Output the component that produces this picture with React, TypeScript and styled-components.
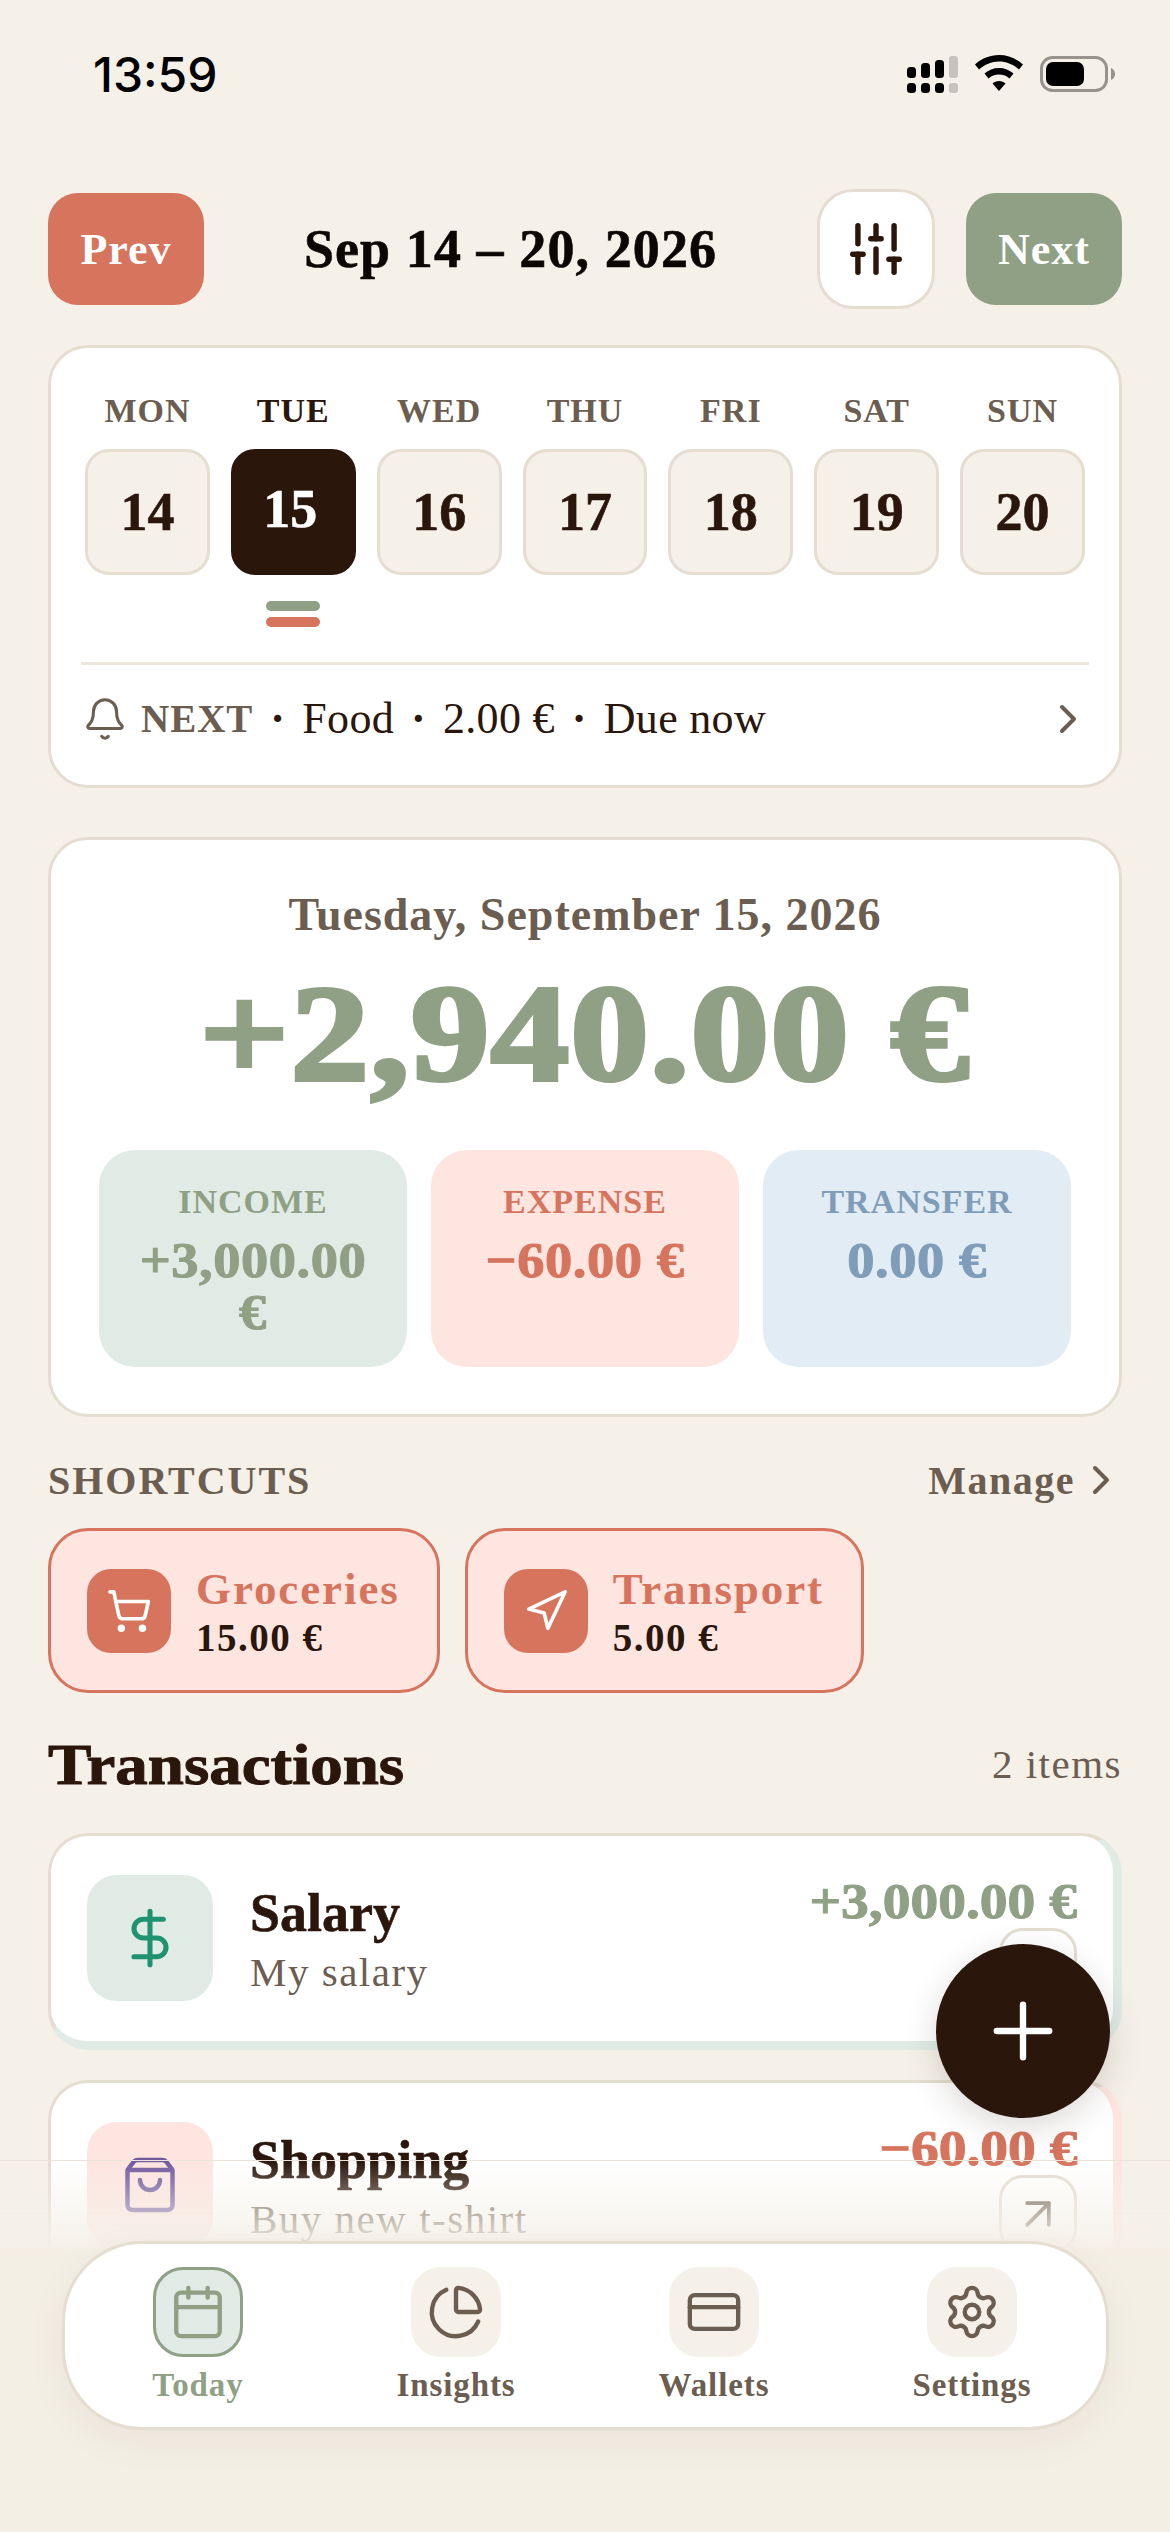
import React from "react";
import styled, { createGlobalStyle } from "styled-components";
import {
  ArrowUpRight,
  Bell,
  Calendar,
  ChartPie,
  ChevronRight,
  CreditCard,
  DollarSign,
  Navigation,
  Plus,
  Settings,
  ShoppingBag,
  ShoppingCart,
  SlidersVertical,
} from "lucide-react";

const SERIF = `"Liberation Serif", "Times New Roman", serif`;

const colors = {
  bg: "#f5f1e9",
  line: "#e5ddd0",
  ink: "#2b160c",
  muted: "#6b5d50",
  sage: "#8fa085",
  coral: "#d6745e",
  sky: "#7f9db8",
  sageSoft: "#e0ebe6",
  coralSoft: "#fee5e0",
  skySoft: "#e2ecf4",
};

const GlobalStyle = createGlobalStyle`
  html, body {
    margin: 0;
    padding: 0;
    background: ${colors.bg};
  }
  * {
    box-sizing: border-box;
  }
`;

const Page = styled.div`
  position: relative;
  width: 1170px;
  height: 2532px;
  overflow: hidden;
  background: ${colors.bg};
  font-family: ${SERIF};
  color: ${colors.ink};
`;

const StatusBar = styled.div`
  display: flex;
  align-items: center;
  justify-content: space-between;
  height: 52px;
  margin-top: 48px;
  padding: 0 55px 0 93px;
`;

const Clock = styled.div`
  font-family: Inter, sans-serif;
  font-size: 48px;
  font-weight: 500;
  color: #000;
`;

const StatusIcons = styled.svg`
  display: block;
`;

const Content = styled.main`
  display: flex;
  flex-direction: column;
  padding: 89px 48px 0;
`;

const TopBar = styled.div`
  display: flex;
  align-items: center;
  height: 120px;
`;

const NavButton = styled.button<{ $bg: string }>`
  width: 156px;
  height: 112px;
  border: 0;
  border-radius: 30px;
  background: ${(p) => p.$bg};
  color: #fff;
  font-family: ${SERIF};
  font-size: 44px;
  font-weight: 700;
  letter-spacing: 1px;
`;

const RangeTitle = styled.h1`
  flex: 1;
  margin: 0;
  text-align: center;
  color: #0c0704;
  font-size: 54px;
  font-weight: 700;
  letter-spacing: 1.1px;
  -webkit-text-stroke: 0.6px #0c0704;
`;

const FilterButton = styled.button`
  display: flex;
  align-items: center;
  justify-content: center;
  width: 118px;
  height: 120px;
  margin-right: 31px;
  border: 3px solid ${colors.line};
  border-radius: 36px;
  background: #fff;
  color: ${colors.ink};
  padding: 0;
`;

const Card = styled.section`
  background: #fff;
  border: 3px solid ${colors.line};
  border-radius: 40px;
`;

const WeekCard = styled(Card)`
  margin-top: 36px;
  height: 443px;
  padding: 43px 30px 0;
`;

const WeekGrid = styled.div`
  display: grid;
  grid-template-columns: repeat(7, 1fr);
  column-gap: 21px;
  padding: 0 4px;
`;

const DayColumn = styled.div`
  display: flex;
  flex-direction: column;
  align-items: center;
`;

const DayName = styled.div<{ $active?: boolean }>`
  height: 40px;
  line-height: 40px;
  font-size: 34px;
  font-weight: 700;
  letter-spacing: 1px;
  color: ${(p) => (p.$active ? colors.ink : colors.muted)};
`;

const DayCell = styled.div<{ $active?: boolean }>`
  display: flex;
  align-items: center;
  justify-content: center;
  width: 100%;
  height: 126px;
  margin-top: 18px;
  padding: ${(p) => (p.$active ? "0 6px 6px 0" : "0")};
  border-radius: 24px;
  border: 3px solid ${(p) => (p.$active ? colors.ink : colors.line)};
  background: ${(p) => (p.$active ? colors.ink : colors.bg)};
  color: ${(p) => (p.$active ? "#fff" : colors.ink)};
  font-size: 54px;
  font-weight: 700;
  -webkit-text-stroke: 0.6px currentColor;
`;

const MarkerStack = styled.div`
  display: flex;
  flex-direction: column;
  gap: 6px;
  height: 87px;
  padding-top: 26px;
`;

const Marker = styled.span<{ $color: string }>`
  display: block;
  width: 54px;
  height: 10px;
  border-radius: 5px;
  background: ${(p) => p.$color};
`;

const NextRow = styled.div`
  display: flex;
  align-items: center;
  height: 110px;
  border-top: 3px solid #ece6db;
  font-size: 44px;
  letter-spacing: 0.3px;
  color: ${colors.ink};
`;

const NextBell = styled(Bell)`
  margin-left: 1px;
`;

const NextLabel = styled.span`
  margin-left: 13px;
  font-size: 39px;
  font-weight: 700;
  letter-spacing: 1px;
  color: ${colors.muted};
`;

const Dot = styled.span`
  margin: 0 17px;
  font-weight: 700;
`;

const RowEnd = styled.span`
  display: flex;
  margin-left: auto;
  margin-right: -3px;
`;

const BalanceCard = styled(Card)`
  margin-top: 49px;
  height: 580px;
  padding: 47px 48px 0;
  text-align: center;
`;

const BalanceDate = styled.div`
  height: 56px;
  line-height: 56px;
  font-size: 46px;
  font-weight: 700;
  letter-spacing: 1px;
  color: ${colors.muted};
`;

const BalanceAmount = styled.div`
  height: 190px;
  line-height: 182px;
  font-size: 138px;
  font-weight: 700;
  letter-spacing: 1px;
  color: ${colors.sage};
  -webkit-text-stroke: 4px ${colors.sage};
  white-space: nowrap;
  transform: scaleX(1.14);
`;

const SummaryGrid = styled.div`
  display: grid;
  grid-template-columns: repeat(3, 1fr);
  gap: 24px;
  margin-top: 17px;
`;

const SummaryTile = styled.div<{ $bg: string; $fg: string }>`
  height: 217px;
  padding: 30px 35px 0;
  border-radius: 36px;
  background: ${(p) => p.$bg};
  color: ${(p) => p.$fg};
`;

const SummaryLabel = styled.div`
  height: 44px;
  line-height: 44px;
  font-size: 34px;
  font-weight: 700;
  letter-spacing: 1px;
`;

const SummaryValue = styled.div`
  margin-top: 10px;
  line-height: 52px;
  font-size: 50px;
  font-weight: 700;
  letter-spacing: 0.5px;
  -webkit-text-stroke: 1px currentColor;
  transform: scaleX(1.09);
`;

const SectionHeader = styled.div<{ $top: number; $height: number }>`
  display: flex;
  align-items: center;
  justify-content: space-between;
  height: ${(p) => p.$height}px;
  margin-top: ${(p) => p.$top}px;
`;

const Eyebrow = styled.h2`
  margin: 0;
  font-size: 40px;
  font-weight: 700;
  letter-spacing: 2px;
  color: ${colors.muted};
`;

const ManageLink = styled.span`
  display: flex;
  align-items: center;
  gap: 2px;
  margin-right: -3px;
  font-size: 40px;
  font-weight: 700;
  letter-spacing: 1.5px;
  color: ${colors.muted};
`;

const ShortcutRow = styled.div`
  display: flex;
  gap: 25px;
  margin-top: 23px;
`;

const Shortcut = styled.div`
  display: flex;
  align-items: center;
  gap: 25px;
  height: 165px;
  padding: 0 37px 0 36px;
  border: 3px solid ${colors.coral};
  border-radius: 40px;
  background: ${colors.coralSoft};
`;

const ShortcutIcon = styled.div`
  display: flex;
  align-items: center;
  justify-content: center;
  width: 84px;
  height: 84px;
  border-radius: 24px;
  background: ${colors.coral};
  color: #fff;
`;

const ShortcutText = styled.div`
  display: flex;
  flex-direction: column;
`;

const ShortcutName = styled.div`
  line-height: 54px;
  font-size: 45px;
  font-weight: 700;
  letter-spacing: 1.9px;
  color: ${colors.coral};
`;

const ShortcutValue = styled.div`
  line-height: 44px;
  font-size: 39px;
  font-weight: 700;
  letter-spacing: 1.5px;
  color: ${colors.ink};
`;

const ListTitle = styled.h2`
  margin: 0;
  font-size: 58px;
  font-weight: 700;
  -webkit-text-stroke: 1px ${colors.ink};
  transform: scaleX(1.12);
  transform-origin: left center;
`;

const ItemCount = styled.span`
  font-size: 41px;
  letter-spacing: 1.5px;
  color: ${colors.muted};
`;

const TxList = styled.div`
  display: flex;
  flex-direction: column;
  gap: 30px;
  margin-top: 34px;
`;

const TxCard = styled(Card)<{ $tint: string }>`
  display: flex;
  align-items: flex-start;
  gap: 37px;
  height: 217px;
  padding: 39px 36px 0 36px;
  border-right: 9px solid ${(p) => p.$tint};
  border-bottom: 9px solid ${(p) => p.$tint};
`;

const TxIcon = styled.div<{ $bg: string; $fg: string }>`
  display: flex;
  flex: none;
  align-items: center;
  justify-content: center;
  width: 126px;
  height: 126px;
  border-radius: 30px;
  background: ${(p) => p.$bg};
  color: ${(p) => p.$fg};
`;

const TxText = styled.div`
  display: flex;
  flex: 1;
  flex-direction: column;
  padding-top: 8px;
`;

const TxName = styled.div`
  line-height: 60px;
  font-size: 54px;
  font-weight: 700;
  -webkit-text-stroke: 0.6px ${colors.ink};
`;

const TxNote = styled.div`
  margin-top: 4px;
  line-height: 50px;
  font-size: 41px;
  letter-spacing: 1.5px;
  color: ${colors.muted};
`;

const TxSide = styled.div`
  display: flex;
  flex-direction: column;
  align-items: flex-end;
`;

const TxAmount = styled.div<{ $color: string }>`
  height: 53px;
  line-height: 52px;
  font-size: 50px;
  font-weight: 700;
  color: ${(p) => p.$color};
  -webkit-text-stroke: 1px ${(p) => p.$color};
  transform: scaleX(1.11);
  transform-origin: right center;
`;

const TxOpen = styled.div`
  display: flex;
  align-items: center;
  justify-content: center;
  width: 78px;
  height: 78px;
  border: 3px solid ${colors.line};
  border-radius: 24px;
  color: ${colors.muted};
`;

const BottomFade = styled.div`
  position: absolute;
  left: 0;
  right: 0;
  top: 2160px;
  bottom: 0;
  border-top: 1px solid rgba(229, 221, 208, 0.6);
  background: linear-gradient(
    to bottom,
    rgba(245, 241, 233, 0) 0,
    rgba(245, 241, 233, 0.8) 72px,
    #f4efe5 92px
  );
`;

const Fab = styled.button`
  position: absolute;
  left: 936px;
  top: 1944px;
  display: flex;
  align-items: center;
  justify-content: center;
  width: 174px;
  height: 174px;
  padding: 0;
  border: 0;
  border-radius: 50%;
  background: ${colors.ink};
  color: #fff;
  box-shadow: 0 10px 34px rgba(43, 22, 12, 0.16);
`;

const TabBar = styled.nav`
  position: absolute;
  left: 62px;
  top: 2241px;
  display: grid;
  grid-template-columns: repeat(4, 258px);
  width: 1047px;
  height: 189px;
  padding: 23px 0 0 4px;
  border: 3px solid ${colors.line};
  border-radius: 80px;
  background: #fff;
  box-shadow: 0 12px 40px rgba(43, 22, 12, 0.05);
`;

const Tab = styled.div`
  display: flex;
  flex-direction: column;
  align-items: center;
`;

const TabIcon = styled.div<{ $active?: boolean }>`
  display: flex;
  align-items: center;
  justify-content: center;
  width: 90px;
  height: 90px;
  border-radius: 30px;
  border: 3px solid ${(p) => (p.$active ? colors.sage : colors.bg)};
  background: ${(p) => (p.$active ? colors.sageSoft : colors.bg)};
  color: ${(p) => (p.$active ? colors.sage : colors.muted)};
`;

const TabLabel = styled.div<{ $active?: boolean }>`
  margin-top: 6px;
  line-height: 44px;
  font-size: 33px;
  font-weight: 700;
  letter-spacing: 0.9px;
  color: ${(p) => (p.$active ? colors.sage : colors.muted)};
`;

const days = [
  ["MON", "14"],
  ["TUE", "15"],
  ["WED", "16"],
  ["THU", "17"],
  ["FRI", "18"],
  ["SAT", "19"],
  ["SUN", "20"],
];

const summary = [
  { label: "INCOME", value: "+3,000.00 €", bg: colors.sageSoft, fg: colors.sage },
  { label: "EXPENSE", value: "−60.00 €", bg: colors.coralSoft, fg: colors.coral },
  { label: "TRANSFER", value: "0.00 €", bg: colors.skySoft, fg: colors.sky },
];

const tabs = [
  { label: "Today", Icon: Calendar, active: true },
  { label: "Insights", Icon: ChartPie },
  { label: "Wallets", Icon: CreditCard },
  { label: "Settings", Icon: Settings },
];

const StatusGlyphs = () => (
  <StatusIcons width="210" height="40" viewBox="905 54 210 40">
    <g fill="#000">
      <rect x="907" y="67" width="9" height="11" rx="3.5" />
      <rect x="921" y="63" width="9" height="15" rx="3.5" />
      <rect x="935" y="60" width="9" height="18" rx="3.5" />
      <rect x="907" y="83" width="9" height="10" rx="3.5" />
      <rect x="921" y="83" width="9" height="10" rx="3.5" />
      <rect x="935" y="83" width="9" height="10" rx="3.5" />
    </g>
    <g fill="#c6c2bc">
      <rect x="949" y="56" width="9" height="22" rx="3" />
      <rect x="949" y="83" width="9" height="10" rx="3" />
    </g>
    <path
      d="M999 55c9 0 17.500 3.500 24 9.500l-4 5c-5.500-5-12.500-8-20-8s-14.500 3-20 8l-4-5c6.500-6 15-9.500 24-9.500z M999 68c5.500 0 10.500 2 14.500 5.500l-4 5c-2.800-2.500-6.500-4-10.500-4s-7.700 1.500-10.500 4l-4-5c4-3.500 9-5.500 14.500-5.500z M999 81c2.500 0 4.800 .9 6.500 2.500l-6.500 7.500-6.500-7.500c1.700-1.600 4-2.500 6.500-2.500z"
      fill="#000"
    />
    <rect x="1041.500" y="57.500" width="65" height="33" rx="11" fill="none" stroke="#97928b" strokeWidth="3" />
    <rect x="1046" y="62" width="38" height="24" rx="7" fill="#000" />
    <path d="M1111 68c2.500 1 4 3.200 4 6s-1.500 5-4 6z" fill="#97928b" />
  </StatusIcons>
);

const App = () => {
  return (
    <Page>
      <GlobalStyle />
      <StatusBar>
        <Clock>13:59</Clock>
        <StatusGlyphs />
      </StatusBar>

      <Content>
        <TopBar>
          <NavButton $bg={colors.coral}>Prev</NavButton>
          <RangeTitle>Sep 14 – 20, 2026</RangeTitle>
          <FilterButton>
            <SlidersVertical size={62} strokeWidth={2.1} />
          </FilterButton>
          <NavButton $bg={colors.sage}>Next</NavButton>
        </TopBar>

        <WeekCard>
          <WeekGrid>
            {days.map(([name, num]) => {
              const active = num === "15";
              return (
                <DayColumn key={num}>
                  <DayName $active={active}>{name}</DayName>
                  <DayCell $active={active}>{num}</DayCell>
                  <MarkerStack>
                    {active && (
                      <>
                        <Marker $color={colors.sage} />
                        <Marker $color={colors.coral} />
                      </>
                    )}
                  </MarkerStack>
                </DayColumn>
              );
            })}
          </WeekGrid>
          <NextRow>
            <NextBell size={46} strokeWidth={1.6} color={colors.muted} />
            <NextLabel>NEXT</NextLabel>
            <Dot>·</Dot>
            Food
            <Dot>·</Dot>
            2.00 €
            <Dot>·</Dot>
            Due now
            <RowEnd>
              <ChevronRight size={48} strokeWidth={2} color={colors.muted} />
            </RowEnd>
          </NextRow>
        </WeekCard>

        <BalanceCard>
          <BalanceDate>Tuesday, September 15, 2026</BalanceDate>
          <BalanceAmount>+2,940.00 €</BalanceAmount>
          <SummaryGrid>
            {summary.map((item) => (
              <SummaryTile key={item.label} $bg={item.bg} $fg={item.fg}>
                <SummaryLabel>{item.label}</SummaryLabel>
                <SummaryValue>{item.value}</SummaryValue>
              </SummaryTile>
            ))}
          </SummaryGrid>
        </BalanceCard>

        <SectionHeader $top={38} $height={50}>
          <Eyebrow>SHORTCUTS</Eyebrow>
          <ManageLink>
            Manage
            <ChevronRight size={48} strokeWidth={2} />
          </ManageLink>
        </SectionHeader>

        <ShortcutRow>
          <Shortcut>
            <ShortcutIcon>
              <ShoppingCart size={46} strokeWidth={1.9} />
            </ShortcutIcon>
            <ShortcutText>
              <ShortcutName>Groceries</ShortcutName>
              <ShortcutValue>15.00 €</ShortcutValue>
            </ShortcutText>
          </Shortcut>
          <Shortcut>
            <ShortcutIcon>
              <Navigation size={46} strokeWidth={1.9} />
            </ShortcutIcon>
            <ShortcutText>
              <ShortcutName>Transport</ShortcutName>
              <ShortcutValue>5.00 €</ShortcutValue>
            </ShortcutText>
          </Shortcut>
        </ShortcutRow>

        <SectionHeader $top={36} $height={70}>
          <ListTitle>Transactions</ListTitle>
          <ItemCount>2 items</ItemCount>
        </SectionHeader>

        <TxList>
          <TxCard $tint={colors.sageSoft}>
            <TxIcon $bg={colors.sageSoft} $fg="#1f9270">
              <DollarSign size={64} strokeWidth={1.9} />
            </TxIcon>
            <TxText>
              <TxName>Salary</TxName>
              <TxNote>My salary</TxNote>
            </TxText>
            <TxSide>
              <TxAmount $color={colors.sage}>+3,000.00 €</TxAmount>
              <TxOpen>
                <ArrowUpRight size={52} strokeWidth={1.7} />
              </TxOpen>
            </TxSide>
          </TxCard>
          <TxCard $tint={colors.coralSoft}>
            <TxIcon $bg={colors.coralSoft} $fg="#7159a0">
              <ShoppingBag size={60} strokeWidth={1.8} />
            </TxIcon>
            <TxText>
              <TxName>Shopping</TxName>
              <TxNote>Buy new t-shirt</TxNote>
            </TxText>
            <TxSide>
              <TxAmount $color={colors.coral}>−60.00 €</TxAmount>
              <TxOpen>
                <ArrowUpRight size={52} strokeWidth={1.7} />
              </TxOpen>
            </TxSide>
          </TxCard>
        </TxList>
      </Content>

      <BottomFade />

      <Fab>
        <Plus size={90} strokeWidth={1.7} />
      </Fab>

      <TabBar>
        {tabs.map(({ label, Icon, active }) => (
          <Tab key={label}>
            <TabIcon $active={active}>
              <Icon size={58} strokeWidth={1.8} />
            </TabIcon>
            <TabLabel $active={active}>{label}</TabLabel>
          </Tab>
        ))}
      </TabBar>
    </Page>
  );
};

export default App;
